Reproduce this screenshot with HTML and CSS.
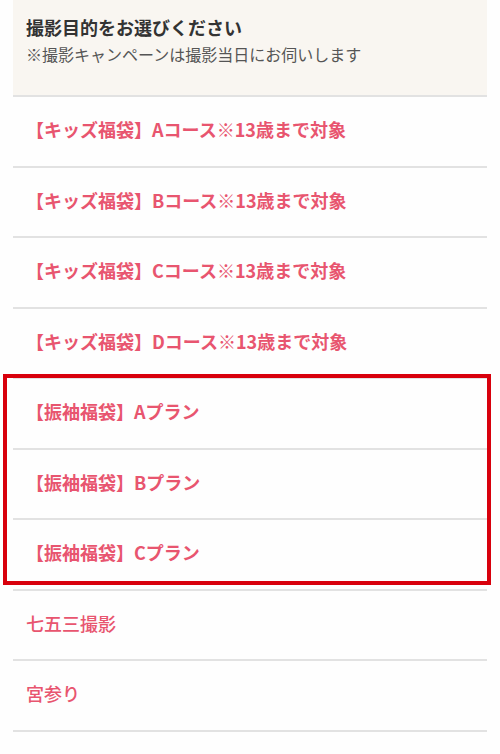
FILE: index.html
```html
<!DOCTYPE html>
<html lang="ja">
<head>
<meta charset="utf-8">
<link rel="stylesheet" href="styles.css">
</head>
<body>
<div class="list">
  <div class="head">
    <div class="title">撮影目的をお選びください</div>
    <div class="note">※撮影キャンペーンは撮影当日にお伺いします</div>
  </div>
  <div class="row bold">【キッズ福袋】Aコース※13歳まで対象</div>
  <div class="row bold">【キッズ福袋】Bコース※13歳まで対象</div>
  <div class="row bold">【キッズ福袋】Cコース※13歳まで対象</div>
  <div class="row bold">【キッズ福袋】Dコース※13歳まで対象</div>
  <div class="group">
    <div class="row bold">【振袖福袋】Aプラン</div>
    <div class="row bold">【振袖福袋】Bプラン</div>
    <div class="row bold">【振袖福袋】Cプラン</div>
  </div>
  <div class="row">七五三撮影</div>
  <div class="row">宮参り</div>
</div>
</body>
</html>
```
FILE: styles.css
```css
html, body {
  margin: 0;
  padding: 0;
  background: #fefefe;
}
body {
  font-family: "Noto Sans CJK JP", "Noto Sans", sans-serif;
}
.list {
  margin: 0 13px;
}
.head {
  height: 95px;
  padding: 0 13px;
  background: #f9f6f1;
  border-bottom: 2px solid #e2e2e2;
}
.title {
  padding-top: 14px;
  font-size: 18px;
  line-height: 26px;
  font-weight: 700;
  color: #333;
}
.note {
  font-size: 16px;
  line-height: 28px;
  color: #555;
}
.row {
  height: 70.5px;
  box-sizing: border-box;
  display: flex;
  align-items: center;
  padding: 0 0 4px 13px;
  border-bottom: 2px solid #e2e2e2;
  font-size: 18px;
  font-weight: 500;
  color: #e8556f;
}
.row.bold {
  font-weight: 700;
}
.group {
  position: relative;
}
.group::before {
  content: "";
  position: absolute;
  top: -5px;
  left: -10px;
  right: -4px;
  bottom: 5.5px;
  border: 4px solid #d8000c;
  pointer-events: none;
}
```
